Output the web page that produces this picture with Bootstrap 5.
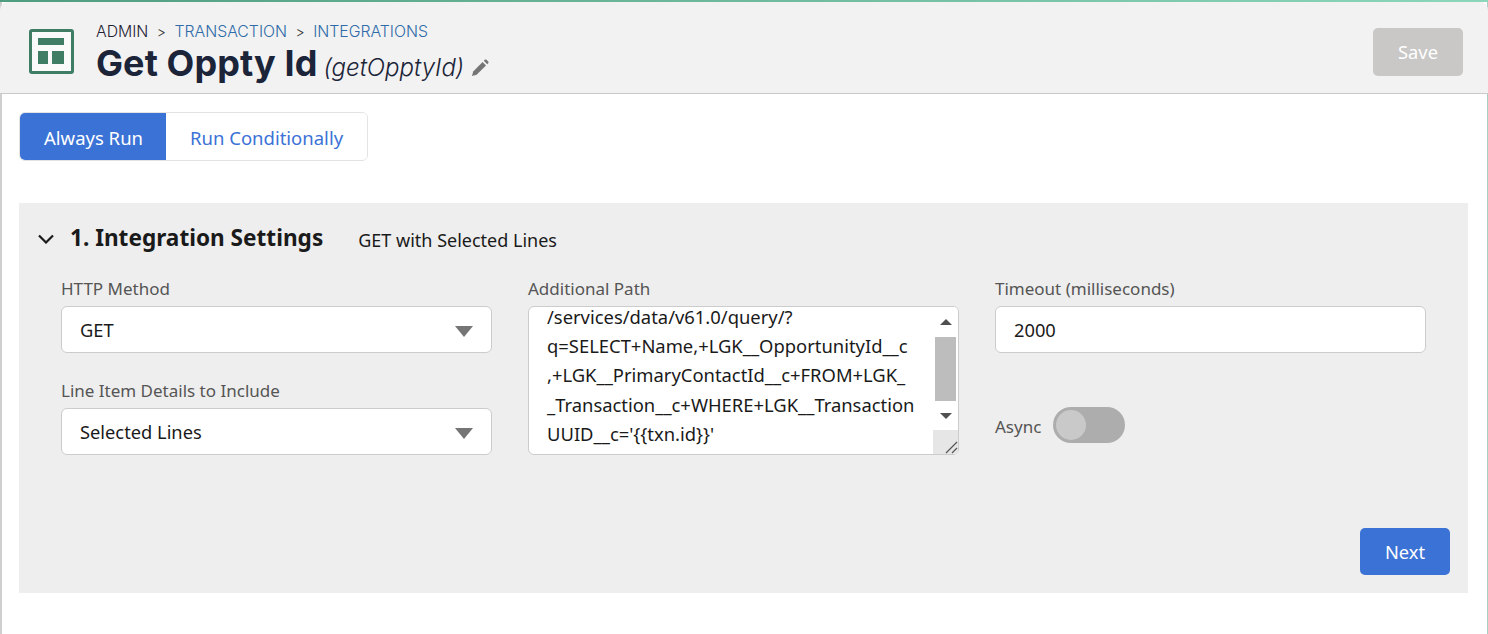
<!DOCTYPE html>
<html lang="en">
<head>
<meta charset="utf-8">
<title>Get Oppty Id</title>
<link href="https://cdn.jsdelivr.net/npm/bootstrap@5.3.0/dist/css/bootstrap.min.css" rel="stylesheet">
<style>
html,body{height:100%;}
body{margin:0;background:#fff;font-family:"Noto Sans","Open Sans",sans-serif;color:#1a1a1a;overflow:hidden;}
.topline{height:2px;background:linear-gradient(90deg,#4f9d80,#8cd7bb);}
.shell{height:632px;border-left:2px solid #cfcfcf;border-right:1px solid #a9cfc4;}
.pagehead{height:92px;margin-left:-2px;margin-right:-1px;background:#f2f2f2;border-bottom:1px solid #c9c9c9;border-radius:8px 8px 0 0;padding:0 25px 0 29px;}
.headicon{width:45px;height:45px;flex:none;margin-top:8px;}
.crumbs{font-family:Inter,sans-serif;font-size:15.8px;line-height:18px;font-weight:300;color:#2f6ba8;margin-top:16px;margin-left:22px;}
.crumbs .root{color:#1f2233;}
.crumbs .sep{color:#333;margin:0 8.5px;font-size:14px;}
.titleline{margin-left:22px;margin-top:-4px;line-height:42px;color:#1b2438;white-space:nowrap;}
.titlemain{font-family:Inter,sans-serif;font-weight:700;font-size:36px;letter-spacing:.1px;}
.titleapi{font-family:Inter,sans-serif;font-style:italic;font-weight:300;font-size:24px;margin-left:6px;margin-top:10px;}
.penicon{margin-top:10px;margin-left:7px;}
.btn-save{width:90px;height:48px;background:#c9c8c6;color:#fff;border:0;border-radius:5px;font-size:18.3px;padding:0;margin-top:8px;}
.toggles{padding:18px 0 0 17px;}
.seg{height:49px;border:1px solid #e3e3e3;border-radius:6px;overflow:hidden;font-size:18.5px;}
.seg span{display:flex;align-items:center;padding:2px 24px 0;}
.seg .on{background:#3b72d6;color:#fff;padding-right:23px;}
.seg .off{background:#fff;color:#3b72d6;}
.panel{margin:42px 19px 0 17px;height:390px;background:#eeeeee;padding:21px 18px 18px 18px;}
.panelhead{height:30px;}
.panelhead svg{width:18px;height:10px;margin-right:15px;}
.paneltitle{font-size:22.6px;font-weight:700;color:#1a1a1a;margin-top:-2px;}
.panelsub{font-size:18px;margin-left:35px;margin-top:3px;color:#1a1a1a;}
.fields{display:grid;grid-template-columns:431px 431px 431px;column-gap:36px;margin:23px 0 0 24px;}
.flabel{font-size:17px;line-height:24px;color:#555;margin-bottom:5px;}
.box{height:47px;background:#fff;border:1px solid #ccc;border-radius:6px;font-size:18.3px;line-height:45px;padding:0 18px;position:relative;color:#1a1a1a;}
.caret{position:absolute;right:18px;top:19px;width:0;height:0;border-left:9px solid transparent;border-right:9px solid transparent;border-top:11px solid #757575;}
.stack{margin-top:26px;}
.area{height:149px;background:#fff;border:1px solid #ccc;border-radius:6px;overflow:hidden;display:flex;}
.areatext{flex:1;padding:0 0 0 18px;font-size:18.4px;line-height:29.2px;margin-top:-5px;white-space:nowrap;color:#1a1a1a;}
.sbar{width:25px;flex:none;display:flex;flex-direction:column;background:#fff;}
.sup,.sdown{height:30px;flex:none;display:flex;align-items:center;justify-content:center;}
.sup i{border-left:6px solid transparent;border-right:6px solid transparent;border-bottom:6px solid #505050;}
.sdown i{border-left:6px solid transparent;border-right:6px solid transparent;border-top:6px solid #505050;}
.strack{height:64px;margin:0 2px;background:#bdbdbd;flex:none;}
.scorner{flex:1;background:#e6e6e6;display:flex;align-items:flex-end;justify-content:flex-end;margin-top:-1px;}
.scorner svg{width:14px;height:14px;}
.asyncrow{margin-top:54px;height:36px;}
.asynclabel{font-size:17px;color:#555;margin-right:12px;margin-top:3px;}
.sw{width:72px;height:36px;border-radius:18px;background:#adadad;position:relative;}
.sw b{position:absolute;left:3px;top:3px;width:30px;height:30px;border-radius:50%;background:#c9c9c9;}
.panelfoot{margin-top:73px;}
.btn-next{width:90px;height:47px;background:#3b72d6;color:#fff;border:0;border-radius:5px;font-size:18.3px;padding:0;}
</style>
</head>
<body>
<div class="topline"></div>
<div class="shell">
  <header class="pagehead d-flex align-items-center justify-content-between">
    <div class="d-flex align-items-center">
      <svg class="headicon" viewBox="0 0 45 45" aria-hidden="true"><rect x="1.500" y="1.500" width="42" height="42" rx="1.500" fill="#fafafa" stroke="#3f7d65" stroke-width="3"/><rect x="9" y="9" width="26" height="7" fill="#3f7d65"/><rect x="9" y="22" width="10" height="13" fill="#3f7d65"/><rect x="23" y="22" width="12" height="13" fill="#3f7d65"/></svg>
      <div class="align-self-start">
        <div class="crumbs"><span class="root">ADMIN</span><span class="sep">&gt;</span>TRANSACTION<span class="sep">&gt;</span>INTEGRATIONS</div>
        <div class="titleline d-flex align-items-center"><span class="titlemain">Get Oppty Id</span><span class="titleapi">(getOpptyId)</span>
          <svg class="penicon" width="18" height="18" viewBox="0 0 18 18" aria-hidden="true"><path d="M1 17l1.200-4.600L11.600 3l3.400 3.400-9.400 9.400z" fill="#757575"/><path d="M12.800 1.800l1-1c.5-.5 1.200-.5 1.700 0l1.700 1.700c.5.5.5 1.200 0 1.700l-1 1z" fill="#757575"/></svg>
        </div>
      </div>
    </div>
    <button class="btn btn-save" type="button">Save</button>
  </header>
  <div class="toggles d-flex">
    <div class="seg d-inline-flex"><span class="on">Always Run</span><span class="off">Run Conditionally</span></div>
  </div>
  <section class="panel">
    <div class="panelhead d-flex align-items-center">
      <svg viewBox="0 0 18 10" aria-hidden="true"><path d="M2 1.500l7 7 7-7" fill="none" stroke="#1a1a1a" stroke-width="2.200"/></svg>
      <span class="paneltitle">1. Integration Settings</span>
      <span class="panelsub">GET with Selected Lines</span>
    </div>
    <div class="fields">
      <div>
        <div class="flabel">HTTP Method</div>
        <div class="box">GET<i class="caret"></i></div>
        <div class="stack">
          <div class="flabel">Line Item Details to Include</div>
          <div class="box">Selected Lines<i class="caret"></i></div>
        </div>
      </div>
      <div>
        <div class="flabel">Additional Path</div>
        <div class="area">
          <div class="areatext">/services/data/v61.0/query/?<br>q=SELECT+Name,+LGK__OpportunityId__c<br>,+LGK__PrimaryContactId__c+FROM+LGK_<br>_Transaction__c+WHERE+LGK__Transaction<br>UUID__c='{{txn.id}}'</div>
          <div class="sbar">
            <div class="sup"><i></i></div>
            <div class="strack"></div>
            <div class="sdown"><i></i></div>
            <div class="scorner"><svg viewBox="0 0 14 14" aria-hidden="true"><path d="M2 13L13 2M8 13l5-5" stroke="#555" stroke-width="1.200" fill="none"/></svg></div>
          </div>
        </div>
      </div>
      <div>
        <div class="flabel">Timeout (milliseconds)</div>
        <div class="box">2000</div>
        <div class="asyncrow d-flex align-items-center">
          <span class="asynclabel">Async</span>
          <div class="sw"><b></b></div>
        </div>
      </div>
    </div>
    <div class="panelfoot d-flex justify-content-end">
      <button class="btn btn-next" type="button">Next</button>
    </div>
  </section>
</div>
</body>
</html>
